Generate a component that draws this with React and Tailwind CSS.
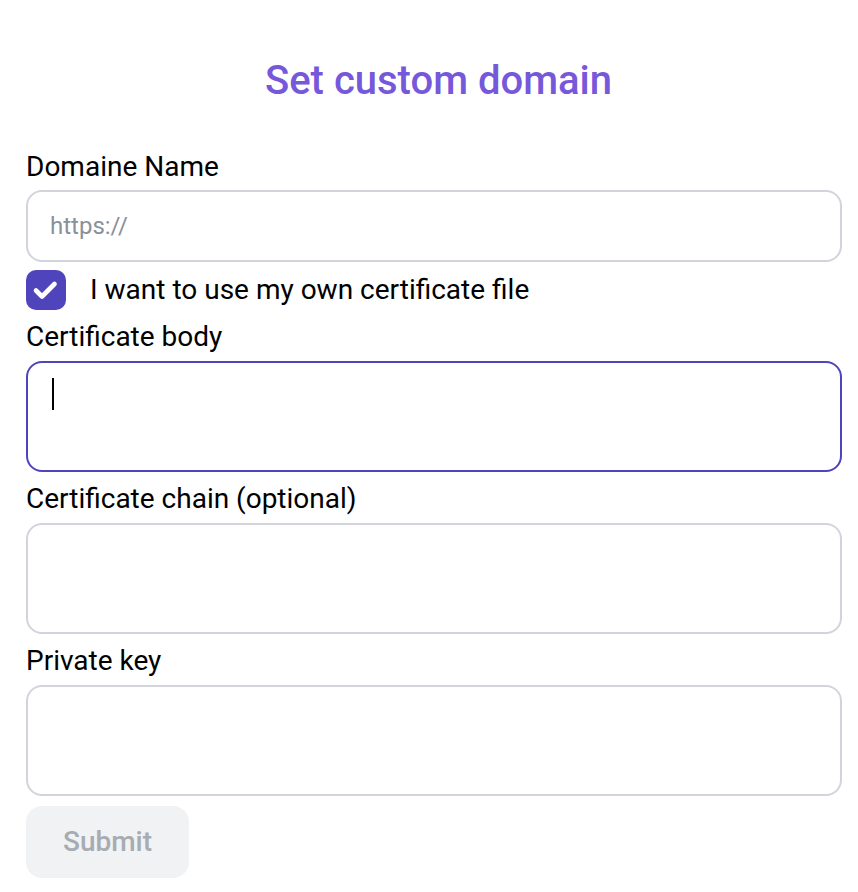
export default function App() {
  const fields = [
    { id: "body", label: "Certificate body", focused: true },
    { id: "chain", label: "Certificate chain (optional)" },
    { id: "key", label: "Private key" },
  ];

  return (
    <div
      className="min-h-screen bg-white pt-[57px] pl-[26px] pr-[16px] text-black"
      style={{ fontFamily: "Roboto, 'Noto Sans', sans-serif" }}
    >
      <h1 className="pl-[9px] text-center text-[40px] leading-[48px] font-medium text-[#7658db]">
        Set custom domain
      </h1>

      <label className="block mt-[42px] text-[28px] leading-[40px]">Domaine Name</label>
      <input
        type="text"
        placeholder="https://"
        className="mt-[3px] block w-full h-[72px] rounded-[16px] border-2 border-[#d1d5db] px-[22px] text-[24px] outline-none placeholder:text-[#8b9099]"
      />

      <div className="mt-[8px] flex items-center h-[40px] gap-[24px]">
        <div className="w-[40px] h-[40px] rounded-[10px] bg-[#5044bd]">
          <svg width="40" height="40" viewBox="0 0 40 40" fill="none">
            <path
              d="M10 20.5l6 6L28.5 14"
              stroke="white"
              strokeWidth="4.6"
              strokeLinecap="round"
              strokeLinejoin="round"
            />
          </svg>
        </div>
        <span className="text-[28px] leading-[40px]">I want to use my own certificate file</span>
      </div>

      {fields.map((f) => (
        <div key={f.id} className="mt-[7px]">
          <label className="block text-[28px] leading-[40px]">{f.label}</label>
          <div className="relative mt-[4px]">
            <textarea
              className={`block w-full h-[111px] resize-none rounded-[16px] border-2 px-[22px] py-[14px] text-[24px] outline-none ${
                f.focused ? "border-[#5044bd]" : "border-[#d1d5db]"
              }`}
            />
            {f.focused && (
              <span className="absolute left-[26px] top-[17px] w-[2px] h-[32px] bg-black" />
            )}
          </div>
        </div>
      ))}

      <button
        disabled
        className="mt-[10px] w-[163px] h-[72px] rounded-[16px] bg-[#f1f2f4] text-[28px] font-medium text-[#a7acb3]"
      >
        Submit
      </button>
    </div>
  );
}
